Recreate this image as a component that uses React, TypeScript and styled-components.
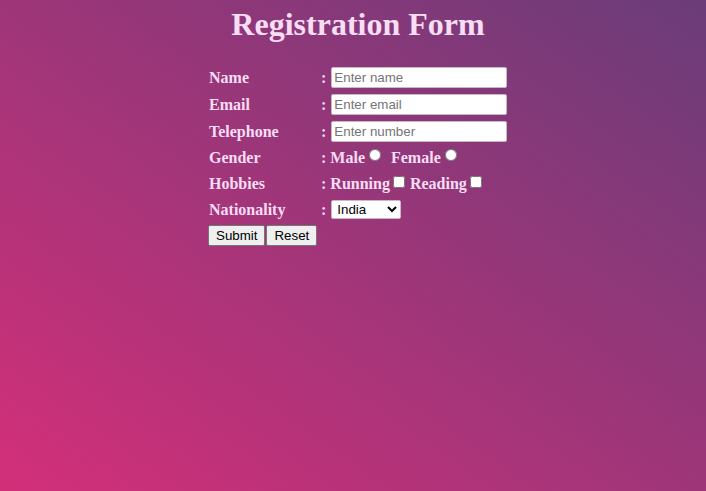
import React from "react";
import styled, { createGlobalStyle } from "styled-components";

const GlobalStyle = createGlobalStyle`
  html, body { margin: 0; padding: 0; }
  body { font-family: "Liberation Serif", "Times New Roman", serif; }
`;

const Page = styled.div`
  min-height: 100vh;
  box-sizing: border-box;
  padding-left: 10px;
  background-image: linear-gradient(to right top, #d32f79, #6a3c79);
  color: #f9ddf4;
  display: flex;
  flex-direction: column;
  align-items: center;
`;

const Title = styled.h1`
  margin: 6px 0 21px;
  font-size: 32px;
  line-height: 37px;
  font-weight: bold;
  text-align: center;
`;

const Form = styled.form`
  width: 300px;
  display: flex;
  flex-direction: column;
`;

const Row = styled.div<{ $h: number }>`
  display: flex;
  align-items: center;
  height: ${(p) => p.$h}px;
`;

const Label = styled.div`
  width: 113px;
  padding-left: 1px;
  box-sizing: border-box;
  font-weight: bold;
  font-size: 16px;
`;

const Cell = styled.div`
  display: flex;
  align-items: center;
  font-weight: bold;
  font-size: 16px;
  white-space: pre;
`;

const TextInput = styled.input`
  width: 176px;
  height: 21px;
  margin-left: 1px;
  box-sizing: border-box;
  border: 1px solid #c9b9c6;
  border-radius: 2px;
  padding: 1px 2px;
  font-family: "Liberation Sans", Arial, sans-serif;
  font-size: 13.33px;
  background: #fff;
  &::placeholder { color: #757575; }
`;

const Radio = styled.input`
  width: 12px;
  height: 12px;
  margin: 0 10px 0 4px;
  position: relative;
  top: -3px;
`;

const Check = styled.input`
  width: 12px;
  height: 12px;
  margin: 0 5px 0 3px;
  position: relative;
  top: -2px;
`;

const Select = styled.select`
  width: 70px;
  height: 19px;
  margin-left: 1px;
  font-family: "Liberation Sans", Arial, sans-serif;
  font-size: 13.33px;
  border: 1px solid #c9b9c6;
  border-radius: 2px;
  background: #fff;
  color: #000;
  padding: 0 0 0 1px;
`;

const Button = styled.button`
  height: 21px;
  padding: 1px 7px;
  margin: 0 1px 0 0;
  font-family: "Liberation Sans", Arial, sans-serif;
  font-size: 13.33px;
  color: #000;
  background: #efefef;
  border: 1px solid #767676;
  border-radius: 2px;
`;

export default function App() {
  return (
    <>
      <GlobalStyle />
      <Page>
        <Title>Registration Form</Title>
        <Form>
          <Row $h={27}>
            <Label>Name</Label>
            <Cell>{": "}<TextInput placeholder="Enter name" /></Cell>
          </Row>
          <Row $h={27}>
            <Label>Email</Label>
            <Cell>{": "}<TextInput placeholder="Enter email" /></Cell>
          </Row>
          <Row $h={27}>
            <Label>Telephone</Label>
            <Cell>{": "}<TextInput placeholder="Enter number" /></Cell>
          </Row>
          <Row $h={26}>
            <Label>Gender</Label>
            <Cell>
              {": Male"}<Radio type="radio" name="g" />{"Female"}<Radio type="radio" name="g" />
            </Cell>
          </Row>
          <Row $h={26}>
            <Label>Hobbies</Label>
            <Cell>
              {": Running"}<Check type="checkbox" />{"Reading"}<Check type="checkbox" />
            </Cell>
          </Row>
          <Row $h={25}>
            <Label>Nationality</Label>
            <Cell>
              {": "}
              <Select defaultValue="India">
                <option>India</option>
                <option>USA</option>
                <option>UK</option>
              </Select>
            </Cell>
          </Row>
          <Row $h={26}>
            <Button type="button">Submit</Button>
            <Button type="reset">Reset</Button>
          </Row>
        </Form>
      </Page>
    </>
  );
}
